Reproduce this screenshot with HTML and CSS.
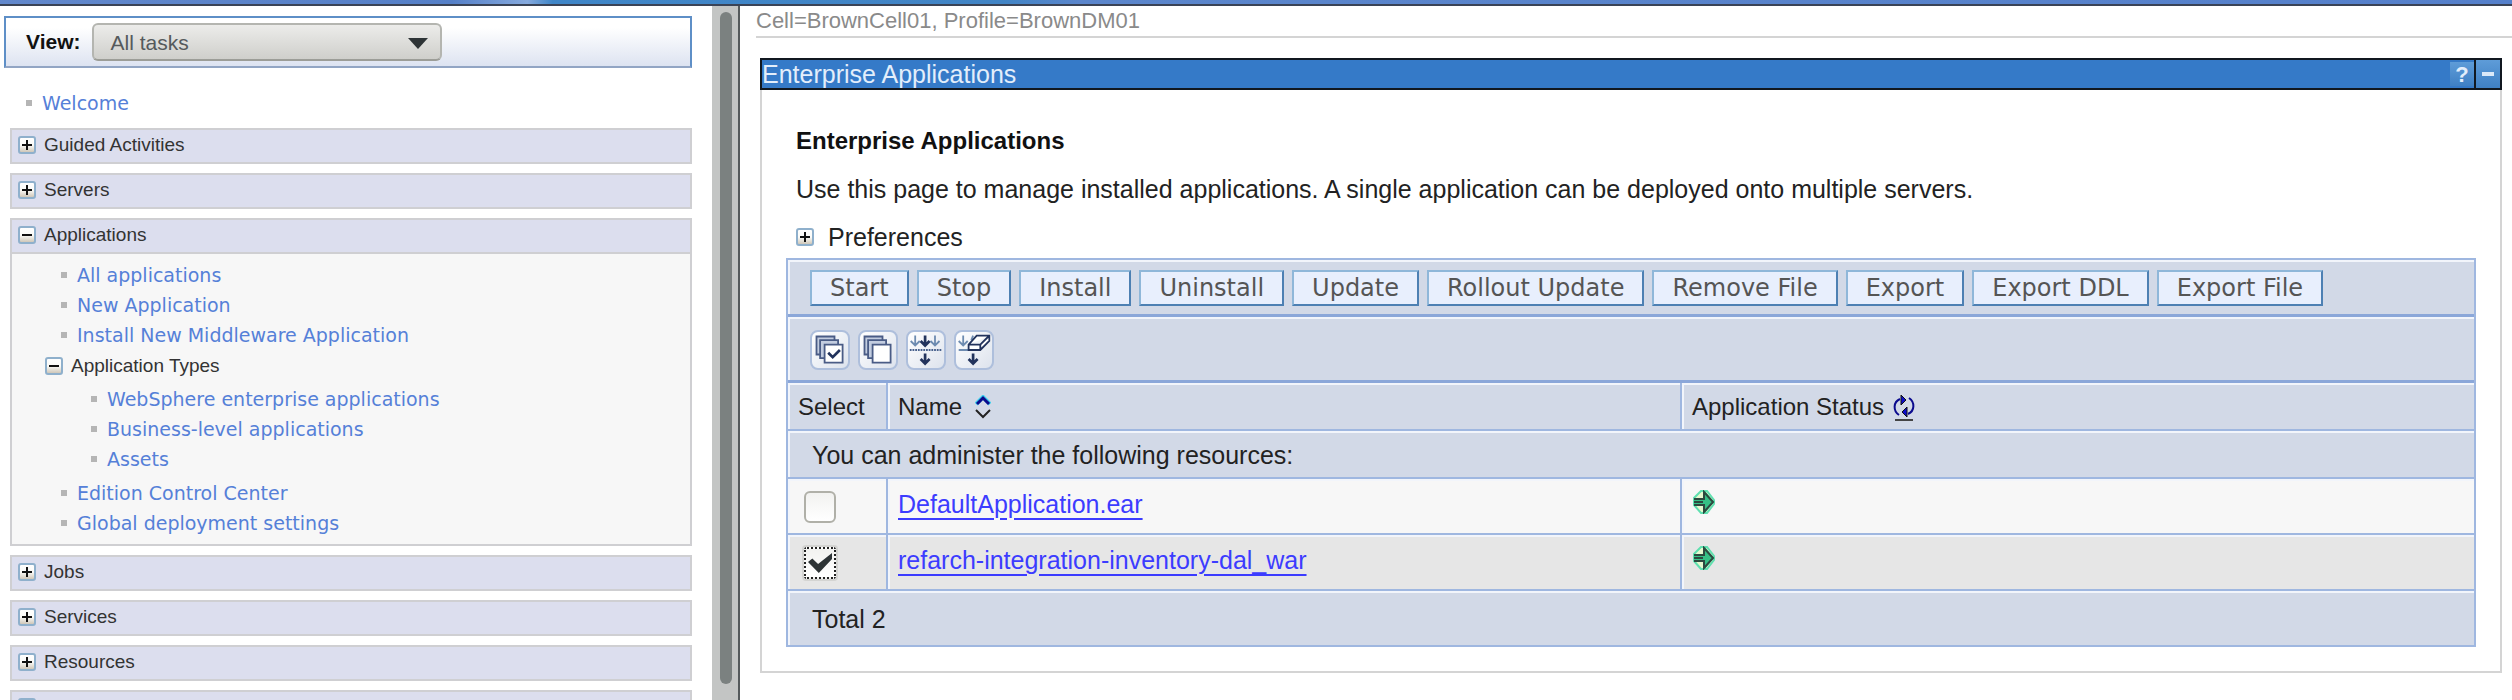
FILE: index.html
```html
<!DOCTYPE html>
<html lang="en">
<head>
<meta charset="utf-8">
<title>Enterprise Applications</title>
<link rel="stylesheet" href="styles.css">
</head>
<body>
<svg class="defs" aria-hidden="true">
  <defs>
    <linearGradient id="box" x1="0" y1="0" x2="0" y2="1"><stop offset="0" stop-color="#fff"/><stop offset=".5" stop-color="#fbfbf8"/><stop offset="1" stop-color="#c9c0b0"/></linearGradient>
    <symbol id="plus" viewBox="0 0 18 18"><rect x="1" y="1" width="16" height="16" rx="2" fill="url(#box)" stroke="#8fb0cc" stroke-width="2"/><path d="M4 9h10M9 4v10" stroke="#111" stroke-width="2"/></symbol>
    <symbol id="minus" viewBox="0 0 18 18"><rect x="1" y="1" width="16" height="16" rx="2" fill="url(#box)" stroke="#8fb0cc" stroke-width="2"/><path d="M4 9h10" stroke="#111" stroke-width="2"/></symbol>
    <symbol id="started" viewBox="0 0 22 24"><path d="M8 1h6l7 9v4l-7 9H8l-7-8V8z" fill="#e6f9cf" stroke="#5fe0b0" stroke-width="2"/><path d="M1 9h9V2l2-1 9 11-9 11-2-1v-7H1z" fill="#35c085"/><path d="M1 9h10V2l9 10-9 10v-7H1M1 12h9" fill="none" stroke="#2c4a40" stroke-width="2"/></symbol>
  </defs>
</svg>
<div class="banner"></div>
<div class="frames">
  <nav class="sidebar">
    <div class="view-box">
      <label for="view">View:</label>
      <div class="select-wrap">
        <select id="view"><option>All tasks</option></select>
        <svg class="caret" viewBox="0 0 20 11"><path d="M0 0h20L10 11z" fill="#2e3436"/></svg>
      </div>
    </div>
    <ul class="links top"><li><a href="#">Welcome</a></li></ul>
    <section class="group"><h2><svg><use href="#plus"/></svg>Guided Activities</h2></section>
    <section class="group"><h2><svg><use href="#plus"/></svg>Servers</h2></section>
    <section class="group open">
      <h2><svg><use href="#minus"/></svg>Applications</h2>
      <ul class="links">
        <li><a href="#">All applications</a></li>
        <li><a href="#">New Application</a></li>
        <li><a href="#">Install New Middleware Application</a></li>
      </ul>
      <h3><svg><use href="#minus"/></svg>Application Types</h3>
      <ul class="links nested">
        <li><a href="#">WebSphere enterprise applications</a></li>
        <li><a href="#">Business-level applications</a></li>
        <li><a href="#">Assets</a></li>
      </ul>
      <ul class="links last">
        <li><a href="#">Edition Control Center</a></li>
        <li><a href="#">Global deployment settings</a></li>
      </ul>
    </section>
    <section class="group"><h2><svg><use href="#plus"/></svg>Jobs</h2></section>
    <section class="group"><h2><svg><use href="#plus"/></svg>Services</h2></section>
    <section class="group"><h2><svg><use href="#plus"/></svg>Resources</h2></section>
    <section class="group"><h2><svg><use href="#plus"/></svg>Runtime Operations</h2></section>
  </nav>
  <div class="scrollbar"><div class="thumb"></div></div>
  <main>
    <p class="cell-info">Cell=BrownCell01, Profile=BrownDM01</p>
    <section class="portlet">
      <header class="portlet-title">
        <span>Enterprise Applications</span>
        <button class="help" aria-label="Help">?</button>
        <button class="min" aria-label="Minimize"><svg viewBox="0 0 12 4"><path d="M0 0h12v4H0z" fill="#dbe9f8"/></svg></button>
      </header>
      <div class="portlet-body">
        <h1>Enterprise Applications</h1>
        <p class="intro">Use this page to manage installed applications. A single application can be deployed onto multiple servers.</p>
        <p class="prefs"><svg><use href="#plus"/></svg>Preferences</p>
        <div class="grid-box">
          <div class="buttons">
            <button>Start</button><button>Stop</button><button>Install</button><button>Uninstall</button><button>Update</button><button>Rollout Update</button><button>Remove File</button><button>Export</button><button>Export DDL</button><button>Export File</button>
          </div>
          <div class="tools">
            <button aria-label="Select all"><svg viewBox="0 0 40 40"><g fill="#c3cde0" stroke="#4a5c86" stroke-width="2"><path d="M5 5h20v20H5z"/><path d="M9 9h20v20H9z"/><path d="M14 14h20v20H14z" fill="#fff"/></g><path d="M18 23l5 5 8-8" fill="none" stroke="#22335c" stroke-width="3"/></svg></button>
            <button aria-label="Deselect all"><svg viewBox="0 0 40 40"><g fill="#c3cde0" stroke="#4a5c86" stroke-width="2"><path d="M5 5h20v20H5z"/><path d="M9 9h20v20H9z"/><path d="M14 14h20v20H14z" fill="#fff"/></g></svg></button>
            <button aria-label="Show filter"><svg viewBox="0 0 40 40"><g fill="none" stroke-width="2"><path d="M8 4v11M3 10l5 5 5-5M30 4v11M25 10l5 5 5-5" stroke="#6d8bb0"/><path d="M19 4v11M14 10l5 5 5-5M19 24v11M14 30l5 5 5-5" stroke="#22335c" stroke-width="3"/><path d="M2 20h35" stroke="#47608c" stroke-dasharray="2 1"/></g></svg></button>
            <button aria-label="Clear filter"><svg viewBox="0 0 40 40"><g fill="none" stroke-width="2"><path d="M8 4v11M3 10l5 5 5-5M19 4l-2 5M3 20h11" stroke="#6d8bb0"/><path d="M19 24v11M14 30l5 5 5-5" stroke="#22335c" stroke-width="3"/><path d="M14 14l9-10h14v6l-10 10H14zM14 14h13l9-9M27 14v6" fill="#fff" stroke="#22335c"/></g></svg></button>
          </div>
          <table>
            <thead>
              <tr>
                <th class="c-select">Select</th>
                <th class="c-name">Name <svg class="sort" viewBox="0 0 16 24"><path d="M1 9l7-7 7 7" fill="none" stroke="#3fd0ee" stroke-width="4"/><path d="M2 9l6-6 6 6" fill="none" stroke="#0a0a8c" stroke-width="3"/><path d="M1 15l7 7 7-7" fill="none" stroke="#222" stroke-width="2"/></svg></th>
                <th>Application Status <a href="#" aria-label="Refresh"><svg class="refresh" viewBox="0 0 22 26"><g fill="none" stroke="#0b0b8e" stroke-width="2"><path d="M6 20C0 16 0 7 7 4M16 3c6 4 6 13-1 16"/></g><path d="M8 0l5 5-5 5zM14 12l-5 5 5 5z" fill="#0d0dc8" stroke="#111"/><path d="M2 25h18" stroke="#444" stroke-width="2"/></svg></a></th>
              </tr>
            </thead>
            <tbody>
              <tr class="info"><td colspan="3">You can administer the following resources:</td></tr>
              <tr class="app"><td><input type="checkbox" aria-label="Select DefaultApplication.ear"></td><td><a href="#">DefaultApplication.ear</a></td><td><svg class="status" role="img" aria-label="Started"><use href="#started"/></svg></td></tr>
              <tr class="app alt"><td><input type="checkbox" checked aria-label="Select refarch-integration-inventory-dal_war"></td><td><a href="#">refarch-integration-inventory-dal_war</a></td><td><svg class="status" role="img" aria-label="Started"><use href="#started"/></svg></td></tr>
            </tbody>
            <tfoot><tr class="total"><td colspan="3">Total 2</td></tr></tfoot>
          </table>
        </div>
      </div>
    </section>
  </main>
</div>
</body>
</html>
```
FILE: styles.css
```css
* { box-sizing: border-box; }
html, body { height: 100%; }
body {
  margin: 0;
  display: flex;
  flex-direction: column;
  overflow: hidden;
  background: #fff;
  color: #222;
  font-family: "Liberation Sans", Arial, sans-serif;
}
h1, h2, h3, p, ul { margin: 0; padding: 0; }
.defs { position: absolute; width: 0; height: 0; }
.banner {
  flex: none;
  height: 6px;
  border-bottom: 2px solid #3a4356;
  background: linear-gradient(90deg, #6288cc 0, #5580c8 18%, #86aade 21%, #3f86c8 22%, #4285c6 40%, #5b86cc 43%, #5580cb 100%);
}
.frames { flex: 1; min-height: 0; display: flex; }

.sidebar { flex: none; width: 712px; padding: 10px 20px 0 4px; overflow: hidden; }
.view-box {
  display: flex;
  align-items: center;
  gap: 12px;
  height: 52px;
  padding-left: 20px;
  border: 2px solid #5e8fc7;
  border-bottom-color: #92a5c4;
  background: linear-gradient(#fff 20%, #dde3f1);
}
.view-box label { font-size: 21px; font-weight: bold; color: #111; }
.select-wrap { position: relative; width: 350px; }
.select-wrap select {
  display: block;
  appearance: none;
  width: 100%;
  height: 38px;
  padding: 0 16px;
  border: 2px solid #b4b5b0;
  border-bottom-color: #9c9d97;
  border-radius: 6px;
  background: linear-gradient(#ececea, #cfcfcb);
  color: #555a5c;
  font: 21px "Liberation Sans", Arial, sans-serif;
}
.caret { position: absolute; right: 14px; top: 15px; width: 20px; height: 11px; pointer-events: none; }

.links { list-style: none; padding: 6px 0 0 49px; }
.links li { display: flex; align-items: center; height: 30px; }
.links li::before { content: ""; width: 6px; height: 6px; margin-right: 10px; background: #b5b5b5; }
.links a {
  color: #5580d8;
  font: 19px "DejaVu Sans", Verdana, sans-serif;
  text-decoration: none;
}
.links.top { padding: 20px 0 10px 22px; }
.links.nested { padding: 0 0 0 79px; }
.links.last { padding: 4px 0 6px 49px; }
.group { margin: 0 0 9px 6px; border: 2px solid #cfcfd2; background: #f7f7f7; }
.group h2, .group h3 {
  display: flex;
  align-items: center;
  gap: 8px;
  height: 32px;
  padding: 0 0 2px 6px;
  background: #dcdeee;
  color: #333;
  font-size: 19px;
  font-weight: normal;
}
.group.open h2 { height: 34px; border-bottom: 2px solid #cfcfd2; }
.group h3 { height: 34px; padding-left: 33px; background: none; }
.group svg, .prefs svg { width: 18px; height: 18px; }

.scrollbar { flex: none; width: 28px; padding: 6px 6px 16px 8px; border-right: 2px solid #555a5c; background: #c3c5c4; }
.thumb { height: 100%; border-radius: 6px; background: #7b8180; }

main { flex: 1; min-width: 0; padding-left: 16px; }
.cell-info {
  height: 32px;
  border-bottom: 2px solid #d4d4d4;
  color: #8a8a8a;
  font-size: 22px;
  line-height: 30px;
}
.portlet { margin: 20px 10px 0 4px; border: 2px solid #d4d4d4; border-top: 0; }
.portlet-title {
  display: flex;
  align-items: center;
  height: 32px;
  margin: 0 -2px;
  border: 2px solid #111820;
  background: #357ac8;
  color: #e3eefb;
  font-size: 25px;
}
.portlet-title span { flex: 1; }
.portlet-title button {
  display: grid;
  place-items: center;
  width: 24px;
  height: 24px;
  padding: 0;
  border: 0;
  background: linear-gradient(#5e9cd8, #3f80c4);
  color: #e3eefb;
  font: bold 22px "Liberation Sans", Arial, sans-serif;
}
.portlet-title .min { width: 26px; height: 28px; border-left: 2px solid #111820; }
.min svg { width: 12px; height: 4px; }
.portlet-body { padding: 36px 24px 24px; font-size: 25px; }
h1 { padding-left: 10px; color: #111; font-size: 24px; line-height: 30px; }
.intro { padding: 18px 0 0 10px; line-height: 30px; }
.prefs { display: flex; align-items: center; gap: 14px; padding: 18px 0 6px 10px; line-height: 30px; }

.grid-box { border: 2px solid #9fb7e0; background: #d2d9e7; }
.buttons, .tools { display: flex; gap: 8px; padding: 10px 22px 8px; border-bottom: 3px solid #8ba7d9; box-shadow: inset 2px 2px #f2f5fb; }
.buttons button {
  height: 36px;
  padding: 0 18px;
  border: 2px solid #8fb7d9;
  border-right-color: #4d80b3;
  border-bottom-color: #4d80b3;
  background: #e8effd;
  color: #555;
  font: 24px/30px "DejaVu Sans", Verdana, sans-serif;
}
.tools { padding: 13px 22px 10px; }
.tools button { width: 40px; height: 40px; padding: 0; border: 2px solid #aebfdc; border-radius: 8px; background: linear-gradient(135deg, #fff, #dde3ed); }
.tools svg { display: block; width: 36px; height: 36px; }

table { width: 100%; border-collapse: separate; border-spacing: 0; table-layout: fixed; }
th, td { height: 48px; padding: 2px 10px 0; border-bottom: 2px solid #9fb7e0; box-shadow: inset 2px 2px #f2f5fb; text-align: left; font-weight: normal; }
th { font-size: 24px; }
th + th, td + td { border-left: 2px solid #9fb7e0; }
.c-select { width: 98px; }
.c-name { width: 794px; }
.sort { width: 16px; height: 24px; margin-left: 6px; vertical-align: -4px; }
.refresh { width: 22px; height: 26px; margin-left: 2px; vertical-align: -6px; }
.info td, .total td { padding-left: 24px; }
.app td { height: 56px; padding: 0 10px 4px; background: #f7f7f7; }
.app td:first-child { padding-bottom: 0; }
.app.alt td { background: #e6e6e6; }
.app a { color: #3c3cff; text-underline-offset: 5px; text-decoration-thickness: 2px; }
.status { display: block; width: 22px; height: 24px; margin: 0 0 4px 1px; }
.total td { height: 54px; border-bottom: 0; }
input[type="checkbox"] {
  appearance: none;
  display: grid;
  place-items: center;
  width: 32px;
  height: 32px;
  margin: 2px 6px 0;
  border: 2px solid #b0b0a8;
  border-radius: 6px;
  background: linear-gradient(#f2f2f0, #fff);
}
input[type="checkbox"]:checked { border: 2px dotted #222; border-radius: 2px; outline: 2px solid #d4d4d2; }
input[type="checkbox"]:checked::before {
  content: "";
  width: 24px;
  height: 20px;
  background: #2e3436;
  clip-path: polygon(0 45%, 18% 28%, 42% 55%, 100% 0, 100% 30%, 45% 100%);
}
```
